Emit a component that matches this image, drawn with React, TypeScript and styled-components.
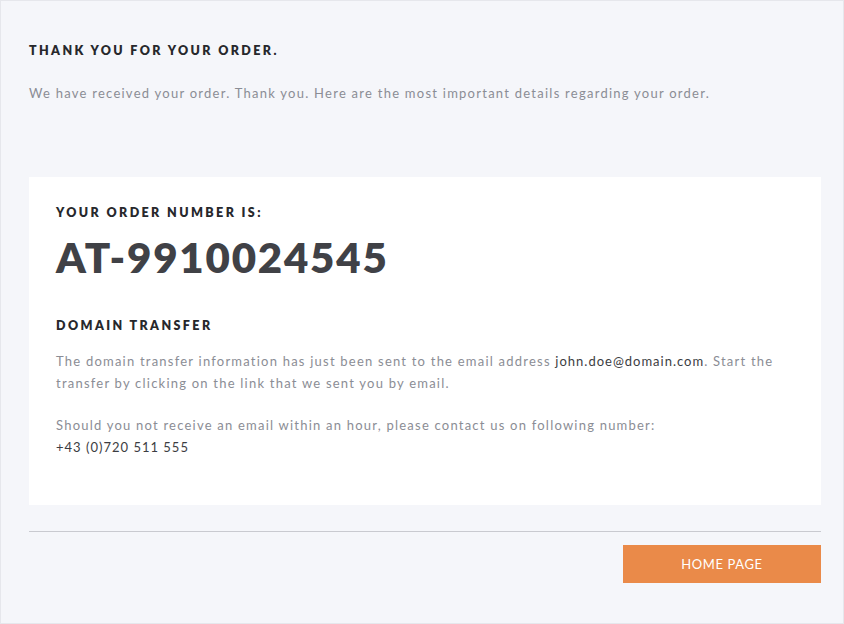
import styled, { createGlobalStyle } from "styled-components";

const colors = {
  bg: "#f5f6fa",
  edge: "#e6e7ec",
  card: "#ffffff",
  title: "#27282c",
  text: "#8b8d95",
  strong: "#3c3d42",
  rule: "#c9cad0",
  accent: "#ea8a49",
};

const GlobalStyle = createGlobalStyle`
  html, body {
    margin: 0;
    padding: 0;
    background: ${colors.bg};
  }
  * { box-sizing: border-box; }
`;

const Page = styled.div`
  width: 844px;
  height: 624px;
  border: 1px solid ${colors.edge};
  background: ${colors.bg};
  padding: 42px 22px 0 28px;
  font-family: Lato, "Liberation Sans", sans-serif;
  display: flex;
  flex-direction: column;
`;

const Heading = styled.h1`
  margin: 0;
  font-size: 12.5px;
  line-height: 16px;
  font-weight: 800;
  letter-spacing: 2.4px;
  text-transform: uppercase;
  color: ${colors.title};
`;

const Intro = styled.p`
  margin: 24px 0 0;
  font-size: 13px;
  line-height: 20px;
  letter-spacing: 1.25px;
  color: ${colors.text};
`;

const Card = styled.section`
  margin-top: 74px;
  background: ${colors.card};
  padding: 28px 26px 40px 27px;
  height: 328px;
`;

const OrderNumber = styled.div`
  margin-top: 11px;
  font-size: 42px;
  line-height: 50px;
  font-weight: 800;
  letter-spacing: 1.8px;
  color: #404146;
`;

const Section = styled.div`
  margin-top: 36px;
`;

const Paragraph = styled.p`
  margin: 16px 0 0;
  font-size: 13px;
  line-height: 22px;
  letter-spacing: 1.22px;
  color: ${colors.text};

  & + & {
    margin-top: 20px;
  }
`;

const Dark = styled.span`
  color: ${colors.strong};
  letter-spacing: 1px;
`;

const Footer = styled.div`
  margin-top: 26px;
  border-top: 1px solid ${colors.rule};
  padding-top: 13px;
  display: flex;
  justify-content: flex-end;
`;

const Button = styled.button`
  width: 198px;
  height: 38px;
  border: none;
  background: ${colors.accent};
  color: #ffffff;
  font-family: Lato, "Liberation Sans", sans-serif;
  font-size: 13px;
  letter-spacing: 0.6px;
  text-transform: uppercase;
  cursor: pointer;
`;

export default function App() {
  return (
    <>
      <GlobalStyle />
      <Page>
        <Heading>Thank you for your order.</Heading>
        <Intro>
          We have received your order. Thank you. Here are the most important details regarding your order.
        </Intro>
        <Card>
          <Heading>Your order number is:</Heading>
          <OrderNumber>AT-9910024545</OrderNumber>
          <Section>
            <Heading>Domain transfer</Heading>
            <Paragraph>
              The domain transfer information has just been sent to the email address{" "}
              <Dark>john.doe@domain.com</Dark>. Start the transfer by clicking on the link that we sent you by email.
            </Paragraph>
            <Paragraph>
              Should you not receive an email within an hour, please contact us on following number:
              <br />
              <Dark>+43 (0)720 511 555</Dark>
            </Paragraph>
          </Section>
        </Card>
        <Footer>
          <Button>Home page</Button>
        </Footer>
      </Page>
    </>
  );
}
